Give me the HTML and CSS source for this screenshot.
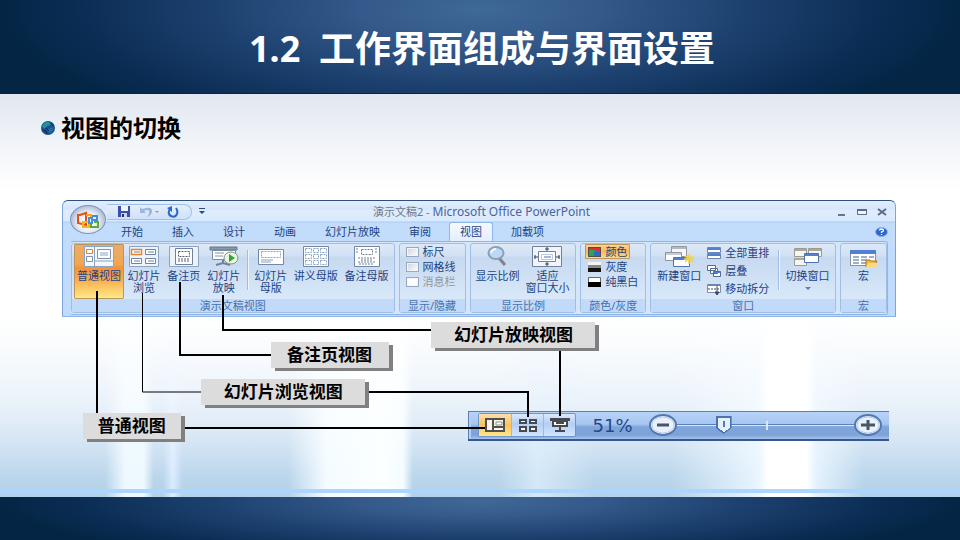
FILE: index.html
```html
<!DOCTYPE html>
<html lang="zh-CN">
<head>
<meta charset="utf-8">
<title>工作界面组成与界面设置</title>
<link rel="stylesheet" href="styles.css">
</head>
<body>
<header class="banner"><h1>1.2  工作界面组成与界面设置</h1></header>
<main class="slide">
  <h2 class="topic">
    <svg class="topic-dot" viewBox="0 0 16 16" aria-hidden="true"><circle cx="8" cy="8" r="7" fill="#17528c"/><path d="M2 6q3-5 7-4l2 3-4 1-3 3z" fill="#2190a0"/><path d="M8 9l4-2 2 2-3 4-3-1z" fill="#1f6f9d"/><path d="M3 10l3 1 1 3M11 3l2 3M6 8l3 3" fill="none" stroke="#0b2367"/></svg>
    视图的切换
  </h2>
  <figure class="diagram">
    <section class="ribbon">
      <div class="titlebar">
        <div class="quick">
          <button class="tool" aria-label="保存"><svg width="14" height="11" viewBox="0 0 14 11"><path d="M1 0h12v11H1z" fill="#3c4fa8"/><path d="M4 0h7v5H4z" fill="#eef3ff"/><path d="M4 7h6v4H4z" fill="#c8d4f0"/><path d="M5 8h2v3H5z" fill="#263572"/></svg></button>
          <button class="tool" aria-label="撤消"><svg width="20" height="12" viewBox="0 0 20 12"><path d="M1 1v6h6L5 5q4-2 5 0t-2 6q5-2 5-6t-6-3L3 3z" fill="#9db4dc"/><path d="M16 5h4l-2 2z" fill="#8a9ab8"/></svg></button>
          <button class="tool" aria-label="重复"><svg width="12" height="12" viewBox="0 0 12 12"><path d="M3 3Q0 8 4 10t6-2q1-3-1-6" fill="none" stroke="#2b67c8" stroke-width="2"/><path d="M5 0v6L0 2z" fill="#2b67c8"/></svg></button>
        </div>
        <button class="tool" aria-label="自定义快速访问工具栏"><svg width="6" height="7" viewBox="0 0 6 7"><path d="M0 0h6v1H0zM0 3h6L3 6z" fill="#294a7d"/></svg></button>
        <p class="doc-name"><span>演示文稿2 - </span>Microsoft Office PowerPoint</p>
        <div class="window-controls">
          <button class="tool" aria-label="最小化"><svg width="10" height="10" viewBox="0 0 10 10"><path d="M1 7h7v2H1z" fill="#66758b"/></svg></button>
          <button class="tool" aria-label="最大化"><svg width="10" height="10" viewBox="0 0 10 10"><path d="M.5 2.500h9v5h-9z" fill="#edf5ff" stroke="#596b86"/><path d="M0 2h10v2H0z" fill="#596b86"/></svg></button>
          <button class="tool" aria-label="关闭"><svg width="10" height="10" viewBox="0 0 10 10"><path d="M1 2l8 6M9 2L1 8" stroke="#596b86" stroke-width="2"/></svg></button>
        </div>
      </div>
      <nav class="tabs">
        <button>开始</button><button>插入</button><button>设计</button><button>动画</button><button>幻灯片放映</button><button>审阅</button><button class="active">视图</button><button>加载项</button>
        <button class="help" aria-label="帮助"><svg width="13" height="10" viewBox="0 0 13 10"><ellipse cx="6.500" cy="5" rx="6" ry="4.500" fill="#2e66cd" stroke="#8db4ee"/><path d="M4.500 3.500q0-1.500 2-1.500t2 1.500q0 1-2 1.500v1M6.500 7v1" fill="none" stroke="#fff" stroke-width="1.300"/></svg></button>
      </nav>
      <button class="office" aria-label="Office 按钮"><svg viewBox="0 0 24 18"><g fill="none" stroke-width="2"><path d="M4 4L10 2v12L2 12V4z" stroke="#e2501b"/><path d="M10 4h5v4" stroke="#f5a61d"/><path d="M7 11h6v5H7z" stroke="#f5b61d"/><path d="M13 7h3v5h-3z" stroke="#4a8ddf"/><path d="M16 5h5v4h-5" stroke="#3f8fd8"/><path d="M15 12v4h7v-5h-4" stroke="#62a93a"/></g></svg></button>
      <div class="panel">
        <section class="group">
          <div class="views">
            <button class="big on"><svg width="30" height="21" viewBox="0 0 30 21"><path d="M.5.5h29v20H.5z" fill="#f4f7fc" stroke="#8ba3c4"/><path d="M10.500 0v21M10.500 15h19" stroke="#8ba3c4"/><path d="M2.500 3.500h6v4h-6z" fill="#fff" stroke="#e5832c"/><path d="M2.500 10.500h6v5h-6z" fill="#fff" stroke="#8192a8"/><path d="M13.500 3.500h13v9h-13z" fill="#fff" stroke="#8192a8"/><path d="M16 7h8M16 9h8" stroke="#8ba8d0"/></svg>普通视图</button>
            <button class="big"><svg width="30" height="21" viewBox="0 0 30 21"><path d="M.5.500h29v20H.5z" fill="#eef3fa" stroke="#8ba3c4"/><g fill="#fff" stroke="#71829c"><path d="M16.500 3.500h10v5h-10zM2.500 12.500h10v5h-10zM16.500 12.500h10v5h-10z"/><path d="M2.500 3.500h10v5h-10z" stroke="#e5832c" stroke-width="1.500"/><path d="M5 6h6M19 6h6M5 15h6M19 15h6"/></g></svg>幻灯片<br>浏览</button>
            <button class="big"><svg width="30" height="21" viewBox="0 0 30 21"><path d="M.5.500h29v20H.5z" fill="#eef3fa" stroke="#8ba3c4"/><path d="M6.500 2.500h17v16h-17z" fill="#fff" stroke="#71829c"/><path d="M9.500 5.500h11v5h-11z" fill="#fff" stroke="#555f72" stroke-dasharray="2 1"/><path d="M9 13h12M9 15h12" stroke="#555f72" stroke-dasharray="2 1"/></svg>备注页</button>
            <button class="big"><svg width="30" height="21" viewBox="0 0 30 21"><path d="M1 1h27v3H1z" fill="#8799aa" stroke="#64798b"/><path d="M3.500 4.500h23v9h-23z" fill="#fff" stroke="#7f8da0"/><path d="M6 7h9M6 10h8" stroke="#8192a8"/><path d="M14 14v3M7 19l7-2 7 2" stroke="#71829c" stroke-width="2" fill="none"/><ellipse cx="22" cy="12" rx="7" ry="6" fill="#e9f5e5" stroke="#7f9588"/><path d="M20 8l6 4-6 4z" fill="#36a336"/></svg>幻灯片<br>放映</button>
            <span class="rule"></span>
            <button class="big"><svg width="30" height="21" viewBox="0 0 30 21"><path d="M2.500 3.500h25v15h-25z" fill="#fff" stroke="#7188a9"/><path d="M5.500 5.500h19v6h-19z" fill="none" stroke="#8ba0bd" stroke-dasharray="2 1"/><path d="M5 14h12M5 16h10" stroke="#8ba0bd"/></svg>幻灯片<br>母版</button>
            <button class="big"><svg width="26" height="21" viewBox="0 0 26 21"><path d="M.5.500h25v20H.5z" fill="#fff" stroke="#7188a9"/><g fill="none" stroke="#8ba0bd" stroke-dasharray="2 1"><path d="M2.500 2.500h6v4h-6zM10.500 2.500h5v4h-5zM17.500 2.500h6v4h-6zM2.500 8.500h6v4h-6zM10.500 8.500h5v4h-5zM17.500 8.500h6v4h-6zM2.500 14.500h6v4h-6zM10.500 14.500h5v4h-5zM17.500 14.500h6v4h-6z"/></g></svg>讲义母版</button>
            <button class="big"><svg width="26" height="21" viewBox="0 0 26 21"><path d="M.5.500h25v20H.5z" fill="#fff" stroke="#7188a9"/><g fill="none" stroke="#70819a" stroke-dasharray="2 1"><path d="M7.500 3.500h11v5h-11zM3 2v5M22 2v5M4 12h18M7 14h12M4 16h18M5 18h14"/></g></svg>备注母版</button>
          </div>
          <h3>演示文稿视图</h3>
        </section>
        <section class="group">
          <div class="rows">
            <label><input type="checkbox">标尺</label>
            <label><input type="checkbox">网格线</label>
            <label class="off"><input type="checkbox" disabled>消息栏</label>
          </div>
          <h3>显示/隐藏</h3>
        </section>
        <section class="group">
          <div class="zooming">
            <button class="big"><svg width="30" height="21" viewBox="0 0 30 21"><path d="M17 12l6 7" stroke="#7e838c" stroke-width="3"/><ellipse cx="14" cy="7" rx="7.500" ry="6" fill="#bad9f7" stroke="#8d9fb5" stroke-width="2"/><path d="M9 7q1-4 5-4" fill="none" stroke="#f4faff" stroke-width="2"/></svg>显示比例</button>
            <button class="big"><svg width="30" height="21" viewBox="0 0 30 21"><path d="M.5.500h29v20H.5z" fill="#f1f5fb" stroke="#71829c"/><path d="M6.500 5.500h17v10h-17z" fill="#fff" stroke="#71829c"/><path d="M9.500 8.500h11v5h-11z" fill="none" stroke="#b6c8e2"/><path d="M12 11h7" stroke="#4a73af"/><path d="M15 1v4M15 16v4M2 11h4M24 11h4M13 3h4M13 18h4M3 9v4M27 9v4" stroke="#38445c"/></svg>适应<br>窗口大小</button>
          </div>
          <h3>显示比例</h3>
        </section>
        <section class="group">
          <div class="rows">
            <button class="small on"><svg width="13" height="10" viewBox="0 0 13 10"><path d="M0 0h13v5H0z" fill="#db3131"/><path d="M0 3h7v7H0z" fill="#30a34c"/><path d="M6 5h7v5H6z" fill="#3166cf"/><path d="M.5.500h12v9H.5z" fill="none" stroke="#4c4f55"/></svg>颜色</button>
            <button class="small"><svg width="13" height="10" viewBox="0 0 13 10"><path d="M0 0h13v4H0z" fill="#f4f4f4"/><path d="M0 3h13v3H0z" fill="#888"/><path d="M0 6h13v4H0z" fill="#111"/></svg>灰度</button>
            <button class="small"><svg width="13" height="10" viewBox="0 0 13 10"><path d="M.5.500h12v9H.5z" fill="#fff" stroke="#666"/><path d="M0 5h13v5H0z" fill="#000"/></svg>纯黑白</button>
          </div>
          <h3>颜色/灰度</h3>
        </section>
        <section class="group">
          <div class="windows">
            <button class="big"><svg width="30" height="21" viewBox="0 0 30 21"><path d="M7.500.500h15v10h-15z" fill="#f7f7f7" stroke="#8f97a3"/><path d="M8 1h14v2H8z" fill="#b4b9c0"/><path d="M1.500 6.500h16v8h-16z" fill="#fff" stroke="#8f97a3"/><path d="M2 7h15v2H2z" fill="#c9ccd2"/><path d="M9.500 11.500h16v9h-16z" fill="#fff" stroke="#4e73b4"/><path d="M10 12h15v2H10z" fill="#4e80d8"/><path d="M25 8v10M20 13h10M21 10l8 6M29 10l-8 6" stroke="#f6d33b" stroke-width="1.500"/></svg>新建窗口</button>
            <div class="stack">
              <button class="small"><svg width="14" height="12" viewBox="0 0 14 12"><g fill="#fff" stroke="#6c86b4"><path d="M.5.500h13v5H.5zM.5 6.500h13v5H.5z"/></g><path d="M1 1h12v2H1zM1 7h12v2H1z" fill="#4e80d8"/></svg>全部重排</button>
              <button class="small"><svg width="14" height="12" viewBox="0 0 14 12"><g fill="#fff" stroke="#566b8d"><path d="M.5.500h8v5h-8zM3.500 3.500h7v5h-7zM6.500 6.500h7v5h-7z"/></g><path d="M7 7h6v1H7z" fill="#4e80d8"/></svg>层叠</button>
              <button class="small"><svg width="14" height="12" viewBox="0 0 14 12"><path d="M.5 1.500h13v8H.5z" fill="#fff" stroke="#8190a9"/><path d="M1 1h12v2H1z" fill="#6e85ad"/><path d="M1 6h12" stroke="#3a4866" stroke-dasharray="2 1"/><path d="M10 3v8M8 9l2 3 2-3z" stroke="#3a4866" fill="#3a4866"/></svg>移动拆分</button>
            </div>
            <span class="rule"></span>
            <button class="big"><svg width="30" height="21" viewBox="0 0 30 21"><g fill="#f6f6f3" stroke="#9c9b91"><path d="M1.500 2.500h12v8h-12zM15.500 2.500h13v8h-13zM1.500 12.500h12v7h-12z"/></g><path d="M2 3h11v2H2zM16 3h12v2H16zM2 12h11v2H2z" fill="#a9a89f"/><path d="M11.500 7.500h14v9h-14z" fill="#fff" stroke="#4e73b4"/><path d="M12 8h13v2H12z" fill="#4e80d8"/></svg>切换窗口<svg class="caret" width="6" height="3" viewBox="0 0 6 3"><path d="M0 0h6L3 3z" fill="#5b7fb4"/></svg></button>
          </div>
          <h3>窗口</h3>
        </section>
        <section class="group">
          <div class="macros">
            <button class="big"><svg width="30" height="21" viewBox="0 0 30 21"><path d="M1.500 4.500h25v15h-25z" fill="#fff" stroke="#7f93b4"/><path d="M1 4h26v4H1z" fill="#4e80d8"/><path d="M4 11h6M12 11h6M20 11h5M4 14h6M12 14h6M4 17h6M12 17h6" stroke="#8296b8" stroke-width="1.500"/><path d="M17 14h4l1 1h6l-3 6h-8z" fill="#f1b83c" stroke="#a9782a"/><path d="M19 17h10l-3 4h-9z" fill="#fadb7e"/></svg>宏</button>
          </div>
          <h3>宏</h3>
        </section>
      </div>
    </section>
    <div class="statusbar">
      <div class="switcher">
        <button class="on" aria-label="普通视图"><svg width="20" height="14" viewBox="0 0 20 14"><path d="M1 1h18v12H1z" fill="#faf5e4" stroke="#51504f" stroke-width="2"/><path d="M8 1v12M8 9h11" stroke="#51504f" stroke-width="2"/><path d="M11 4h6v3h-6z" fill="#fff" stroke="#8c8b88"/></svg></button>
        <button aria-label="幻灯片浏览"><svg width="20" height="14" viewBox="0 0 20 14"><g fill="#f7f9ff" stroke="#494a50" stroke-width="2"><path d="M2 2h6v3H2zM12 2h6v3h-6zM2 9h6v4H2zM12 9h6v4h-6z"/></g></svg></button>
        <button aria-label="幻灯片放映"><svg width="20" height="14" viewBox="0 0 20 14"><path d="M0 0h20v3H0z" fill="#494a50"/><path d="M3 3h14v5H3z" fill="#fff" stroke="#494a50" stroke-width="2"/><path d="M6 5h8M10 9v4M5 13h10" stroke="#494a50" stroke-width="2"/></svg></button>
      </div>
      <output>51%</output>
      <div class="zoom">
        <button class="round" aria-label="缩小"><svg viewBox="0 0 28 22"><ellipse cx="14" cy="11" rx="13" ry="10" fill="#e8f1fd" stroke="#5478ae" stroke-width="2"/><ellipse cx="14" cy="11" rx="11" ry="8" fill="none" stroke="#b7cdec"/><path d="M8 11h12" stroke="#4a5567" stroke-width="3"/></svg></button>
        <input type="range" min="0" max="100" value="24" aria-label="显示比例">
        <button class="round" aria-label="放大"><svg viewBox="0 0 28 22"><ellipse cx="14" cy="11" rx="13" ry="10" fill="#e8f1fd" stroke="#5478ae" stroke-width="2"/><ellipse cx="14" cy="11" rx="11" ry="8" fill="none" stroke="#b7cdec"/><path d="M7 11h14M14 6v10" stroke="#4a5567" stroke-width="3"/></svg></button>
      </div>
    </div>
    <svg class="links" viewBox="0 0 834 241" preserveAspectRatio="none" aria-hidden="true">
      <path class="thick" d="M35 91V214M118 82V155H212M161 95V130H370"/>
      <path class="thick" d="M119 228H423M301 192H466V217M498 148V216"/>
      <path d="M80.500 93V192H140"/>
    </svg>
    <span class="callout normal">普通视图</span>
    <span class="callout sorter">幻灯片浏览视图</span>
    <span class="callout notes">备注页视图</span>
    <span class="callout show">幻灯片放映视图</span>
  </figure>
  <div class="stripe"></div>
</main>
<footer class="base"></footer>
</body>
</html>
```
FILE: styles.css
```css
* { box-sizing: border-box; }
body {
  margin: 0;
  min-height: 100vh;
  display: flex;
  flex-direction: column;
  font-family: "Noto Sans", "Noto Sans CJK SC", sans-serif;
  color: #000;
}
h1, h2, h3, p, figure { margin: 0; }
button {
  padding: 0;
  border: 0;
  background: none;
  font: inherit;
  color: inherit;
}
svg { display: block; flex: none; }

.banner {
  display: grid;
  place-items: center;
  min-height: 94px;
  padding: 4px 0 0 4px;
  background: radial-gradient(ellipse 50% 150% at 50% 10%, #3f6997 0%, #34598a 25%, #1d416f 55%, #0a2c53 85%, #042644 100%);
  border-bottom: 1px solid #0c2340;
}
.banner h1 {
  font-size: 36px;
  line-height: 48px;
  white-space: pre;
  color: #fff;
}

.slide {
  flex: 1;
  display: flex;
  flex-direction: column;
  background:
    linear-gradient(#fff 54%, rgba(255, 255, 255, .5) 75%, rgba(255, 255, 255, 0) 95%) 0 0 / 100% 100%,
    linear-gradient(90deg, transparent 11%, #edf8ff 13%, #edf8ff 15%, transparent 16%, transparent 17%, #dcecff 18%, transparent 19%, transparent 30%, #f4fcff 34%, #fbffff 40%, #f4fcff 42%, transparent 43%, transparent 52%, #d5e8f8 56%, transparent 62%, transparent 70%, #e9f5ff 79%, #fff 80%, #fff 83%, #fff 84%, #e4f2fd 85%, transparent 90%),
    linear-gradient(#fff 45%, #e6f0fa 60%, #d3e4f4 80%, #c0d9ee 92%, #b3d1e7 100%);
  position: relative;
}
.slide::before {
  content: "";
  position: absolute;
  inset: 0 0 auto;
  height: 96px;
  background: linear-gradient(#e1e7ef, #f1f4f9 50%, #fff);
}
.topic {
  position: relative;
  display: flex;
  align-items: center;
  gap: 5px;
  padding: 16px 40px 0;
  font-size: 24px;
  line-height: 36px;
}
.topic-dot { width: 16px; height: 16px; }

.diagram {
  position: relative;
  margin: 54px 64px 0 62px;
}
.ribbon {
  position: relative;
  padding: 0 7px 1px;
  border: 1px solid #3f6599;
  border-color: #2f4f80 #7ba4d8 #8fb5e6;
  border-radius: 6px 6px 0 0;
  background: linear-gradient(#e3efff 0, #d3e5fd 8px, #dfecfd 9px, #d9eafe 20px, #a9cbf5 21px, #c3dcfb 22px, #bfdbff 100%);
  font-size: 11px;
  line-height: 12px;
  color: #1d4383;
}
.titlebar {
  display: flex;
  align-items: center;
  gap: 7px;
  height: 21px;
  padding: 0 1px 0 37px;
}
.tool { display: grid; place-items: center; }
.quick {
  display: flex;
  align-items: center;
  gap: 8px;
  height: 16px;
  padding: 0 12px 0 10px;
  border: 1px solid #a3bfe5;
  border-left: 0;
  border-radius: 0 8px 8px 0;
  background: linear-gradient(#e2eefd, #cfe1f9);
}
.doc-name {
  flex: 1;
  padding-right: 79px;
  text-align: center;
  font-size: 12px;
  color: #49659a;
}
.doc-name span { font-size: 11px; color: #6d7789; }
.window-controls { display: flex; gap: 10px; }
.tabs {
  display: flex;
  align-items: stretch;
  gap: 7px;
  height: 19px;
  padding-left: 40px;
}
.tabs button { padding: 0 11px; }
.tabs .active {
  border: 1px solid #8fb5e9;
  border-bottom: 0;
  border-radius: 3px 3px 0 0;
  background: linear-gradient(#f4f9ff, #e4effd);
  padding: 0 10px;
}
.tabs .help {
  padding: 0;
  margin-left: auto;
  display: grid;
  place-items: center;
}
.office {
  position: absolute;
  left: 7px;
  top: 4px;
  width: 36px;
  height: 29px;
  display: grid;
  place-items: center;
  border: 1px solid #8097bb;
  border-radius: 50%;
  background: radial-gradient(ellipse at 50% 60%, #fff 10%, #e5ebf4 45%, #a9b9d3 75%, #eef3fb 100%);
}
.office svg { width: 24px; height: 18px; }

.panel {
  display: grid;
  grid-template-columns: 324fr 67fr 107fr 66fr 186fr 47fr;
  gap: 4px;
  padding: 1px 0;
  border: 1px solid #8fb5e9;
  border-left-color: #c5dcf8;
  border-radius: 3px;
  background: #d5e6fb;
}
.group {
  display: flex;
  flex-direction: column;
  min-width: 0;
  border: 1px solid #a0bfe6;
  border-radius: 3px;
  background: linear-gradient(#dde9f7 0, #d1e0f3 12px, #c7d9f0 13px, #d9e9fa 56px);
}
.group h3 {
  font-size: 11px;
  font-weight: 400;
  line-height: 13px;
  text-align: center;
  color: #4670ad;
  background: #c2dafa;
}
.group > div { height: 55px; }
.big {
  display: flex;
  flex-direction: column;
  align-items: center;
  padding-top: 2px;
  white-space: nowrap;
  line-height: 12px;
  min-width: 0;
}
.big > svg:first-child { margin-bottom: 3px; }
.big .caret { margin-top: 5px; }
.big.on {
  border-radius: 2px;
  background: linear-gradient(#e9ad6b 0, #f2a651 20px, #f6913a 24px, #f9ae50 36px, #fee27e 52px, #fff0a4 100%);
  box-shadow: inset 0 0 0 1px #b9945c;
}
.rule {
  width: 1px;
  margin: 6px auto 9px;
  background: #9fbce2;
  box-shadow: 1px 0 #eef5fe;
}
.views {
  display: grid;
  grid-template-columns: 50fr 40fr 40fr 40fr 8fr 38fr 52fr 50fr;
  padding: 0 2px;
}
.rows { display: flex; flex-direction: column; padding-left: 4px; }
.rows label, .small {
  display: flex;
  align-items: center;
  gap: 4px;
  height: 15px;
  white-space: nowrap;
}
.rows .off { color: #8f969f; }
.rows input {
  appearance: none;
  width: 13px;
  height: 10px;
  margin: 0 0 0 2px;
  border: 1px solid #97a9c2;
  background: linear-gradient(135deg, #cdd2da, #fff);
  box-shadow: inset 0 0 0 1px #f2f5fa;
}
.rows input:disabled { background: #fdfdfd; }
.rows .small { align-self: flex-start; padding: 0 3px; }
.small.on {
  border-radius: 1px;
  background: linear-gradient(#fbd69c, #fbb957 50%, #fde08c);
  box-shadow: inset 0 0 0 1px #c19a58;
}
.zooming { display: grid; grid-template-columns: 1fr 1fr; padding: 0 3px 0 2px; }
.windows {
  display: grid;
  grid-template-columns: 56fr 70fr 3fr 55fr;
}
.stack { display: flex; flex-direction: column; }
.stack .small { height: 18px; }
.macros { display: grid; }

.statusbar {
  display: flex;
  align-items: center;
  height: 30px;
  margin: 94px 7px 0 406px;
  padding: 0 7px 1px 10px;
  border-top: 1px solid #5683bd;
  border-bottom: 2px solid #36588f;
  background: linear-gradient(#b8d3f8, #a6c5f0 45%, #7fa6dc 55%, #7da2d7 85%, #a5c3ec 100%);
  box-shadow: inset 1px 0 #5a7fb4, inset 3px 0 #b5cff5;
}
.switcher {
  display: grid;
  grid-template-columns: 1fr 1fr 1fr;
  width: 98px;
  height: 24px;
  border: 1px solid #6f94ca;
  border-radius: 2px;
  background: linear-gradient(#dae8fb, #b3cff5 45%, #d3e4fc);
}
.switcher button { display: grid; place-items: center; }
.switcher button + button { border-left: 1px solid #9ab8e2; }
.switcher .on { background: linear-gradient(#fce0ae, #fbc15d 50%, #fee88f); }
.statusbar output {
  flex: none;
  width: 73px;
  text-align: center;
  font: 18px "DejaVu Sans", sans-serif;
  color: #24478a;
}
.zoom { flex: 1; display: flex; align-items: center; min-width: 0; }
.round { flex: none; width: 28px; height: 22px; }
.zoom input {
  appearance: none;
  flex: 1;
  min-width: 0;
  height: 22px;
  margin: 0;
  background:
    linear-gradient(#dbe8fb, #dbe8fb) 51% 50% / 2px 9px no-repeat,
    linear-gradient(#5b80b8 50%, #dbe8fb 50%) 0 50% / 100% 2px no-repeat;
}
.zoom input::-webkit-slider-thumb {
  appearance: none;
  width: 16px;
  height: 18px;
  clip-path: polygon(0 0, 100% 0, 100% 65%, 50% 100%, 0 65%);
  background:
    linear-gradient(#557caf, #557caf) 50% 5px / 2px 6px no-repeat,
    conic-gradient(from -55deg at 50% 100%, #e6f0fd 110deg, #4a73af 0) 2px 2px / 12px 14px no-repeat,
    #4a73af;
}

.links {
  position: absolute;
  inset: 0;
  width: 100%;
  height: 100%;
  pointer-events: none;
}
.links path {
  fill: none;
  stroke: #000;
  stroke-width: 1px;
  vector-effect: non-scaling-stroke;
}
.links .thick { stroke-width: 2px; }
.callout {
  position: absolute;
  display: grid;
  place-items: center;
  height: 26px;
  background: #dcdcdc;
  box-shadow: 4px 3px #808080;
  font-size: 17px;
  font-weight: 700;
  line-height: 26px;
  white-space: nowrap;
}
.normal { left: 2.5%; top: 213px; width: 98px; }
.sorter { left: 16.7%; top: 179px; width: 164px; }
.notes { left: 25%; top: 142px; width: 118px; }
.show { left: 44.3%; top: 122px; width: 164px; }

.stripe {
  position: relative;
  height: 4px;
  margin: auto 0 4px;
  background: #acd5ff;
}
.base {
  height: 43px;
  background: radial-gradient(ellipse 50% 150% at 50% 10%, #3f6997 0%, #34598a 25%, #1d416f 55%, #0a2c53 85%, #042644 100%);
}
```
